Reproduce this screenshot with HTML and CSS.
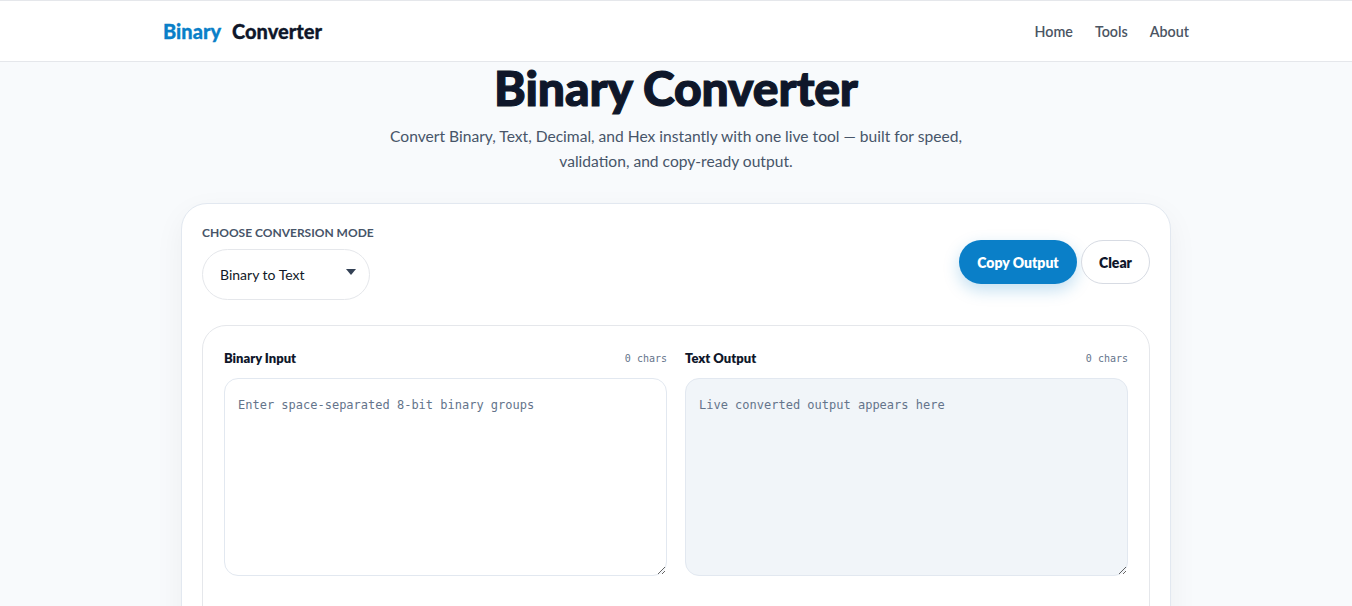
FILE: index.html
```html
<!DOCTYPE html>
<html lang="en">
<head>
<meta charset="utf-8">
<title>Binary Converter</title>
<link rel="stylesheet" href="styles.css">
</head>
<body>
<header class="site-header">
  <div class="wrap header-inner">
    <a class="logo" href="#"><span class="logo-accent">Binary</span><span class="logo-main">Converter</span></a>
    <nav class="nav">
      <a href="#">Home</a>
      <a href="#">Tools</a>
      <a href="#">About</a>
    </nav>
  </div>
</header>

<main class="wrap main">
  <section class="hero">
    <h1>Binary Converter</h1>
    <p>Convert Binary, Text, Decimal, and Hex instantly with one live tool — built for speed, validation, and copy-ready output.</p>
  </section>

  <section class="card">
    <div class="toolbar">
      <div class="mode">
        <label class="mode-label" for="mode">Choose conversion mode</label>
        <div class="select" id="mode">
          <span>Binary to Text</span>
          <span class="caret"></span>
        </div>
      </div>
      <div class="actions">
        <button class="btn btn-primary">Copy Output</button>
        <button class="btn btn-ghost">Clear</button>
      </div>
    </div>

    <div class="panel">
      <div class="field">
        <div class="field-head">
          <span class="field-title">Binary Input</span>
          <span class="count">0 chars</span>
        </div>
        <textarea class="box" placeholder="Enter space-separated 8-bit binary groups"></textarea>
      </div>
      <div class="field">
        <div class="field-head">
          <span class="field-title">Text Output</span>
          <span class="count">0 chars</span>
        </div>
        <textarea class="box box-out" readonly placeholder="Live converted output appears here"></textarea>
      </div>
    </div>
  </section>
</main>
</body>
</html>
```

FILE: styles.css
```css
* { box-sizing: border-box; }

html, body { margin: 0; }

body {
  background: #f8fafc;
  color: #0f172a;
  font-family: Lato, "Noto Sans", "Liberation Sans", sans-serif;
}

a { text-decoration: none; color: inherit; }

.wrap {
  width: 1026px;
  margin: 0 auto;
}

/* top bar */
.site-header {
  background: #ffffff;
  border-top: 1px solid #e5e7eb;
  border-bottom: 1px solid #e5e7eb;
}

.header-inner {
  height: 60px;
  display: flex;
  align-items: center;
  justify-content: space-between;
}

.logo {
  font-size: 20px;
  font-weight: 900;
  display: flex;
  gap: 11px;
  -webkit-text-stroke: 0.3px currentColor;
}

.logo-accent { color: #0a7fc8; }
.logo-main { color: #0f172a; }

.nav {
  display: flex;
  gap: 22px;
  font-size: 14.3px;
  font-weight: 600;
  color: #4b5563;
}

/* hero */
.hero {
  text-align: center;
}

.hero h1 {
  margin: 0;
  font-size: 48px;
  font-weight: 900;
  line-height: 52px;
  letter-spacing: -0.1px;
  color: #0f172a;
  -webkit-text-stroke: 1.2px #0f172a;
}

.hero p {
  margin: 10px auto 0;
  max-width: 600px;
  font-size: 15.6px;
  line-height: 25px;
  color: #475569;
}

/* converter card */
.card {
  margin: 29px auto 0;
  width: 990px;
  background: #ffffff;
  border: 1px solid #e2e8f0;
  border-radius: 26px;
  box-shadow: 0 10px 30px rgba(15, 23, 42, 0.05);
  padding: 21px 20px 20px;
}

.toolbar {
  display: flex;
  justify-content: space-between;
  align-items: flex-end;
}

.mode-label {
  display: block;
  font-size: 12px;
  font-weight: 700;
  text-transform: uppercase;
  color: #475569;
  margin-bottom: 9px;
}

.select {
  width: 168px;
  height: 51px;
  border: 1px solid #e5e7eb;
  border-radius: 26px;
  display: flex;
  align-items: center;
  justify-content: space-between;
  padding: 0 13px 0 17px;
  font-size: 14px;
  color: #111827;
}

.caret {
  width: 0;
  height: 0;
  border-left: 5px solid transparent;
  border-right: 5px solid transparent;
  border-top: 6px solid #334155;
  margin-top: -5px;
}

.actions {
  display: flex;
  gap: 4px;
  margin-bottom: 16px;
}

.btn {
  height: 44px;
  border-radius: 22px;
  font-family: inherit;
  font-size: 14px;
  font-weight: 800;
  cursor: pointer;
}

.btn-primary {
  width: 118px;
  background: #0a7fc8;
  color: #ffffff;
  border: none;
  box-shadow: 0 6px 16px rgba(10, 127, 200, 0.25);
}

.btn-ghost {
  width: 69px;
  background: #ffffff;
  color: #0f172a;
  border: 1px solid #d7dbe3;
}

/* input/output panel */
.panel {
  margin-top: 25px;
  border: 1px solid #e5e7eb;
  border-radius: 24px;
  padding: 24px 21px 60px;
  display: grid;
  grid-template-columns: 1fr 1fr;
  gap: 18px;
}

.field-head {
  display: flex;
  justify-content: space-between;
  align-items: center;
  margin-bottom: 12px;
}

.field-title {
  font-size: 13px;
  font-weight: 800;
  color: #0f172a;
}

.count {
  font-family: "DejaVu Sans Mono", "Liberation Mono", monospace;
  font-size: 10px;
  color: #64748b;
}

.box {
  display: block;
  width: 100%;
  height: 198px;
  border: 1px solid #e2e8f0;
  border-radius: 14px;
  padding: 17px 13px;
  font-family: "DejaVu Sans Mono", "Liberation Mono", monospace;
  font-size: 12px;
  line-height: 18px;
  color: #0f172a;
  background: #ffffff;
  resize: vertical;
  outline: none;
}

.box::placeholder { color: #64748b; }

.box-out { background: #f1f5f9; }
```
